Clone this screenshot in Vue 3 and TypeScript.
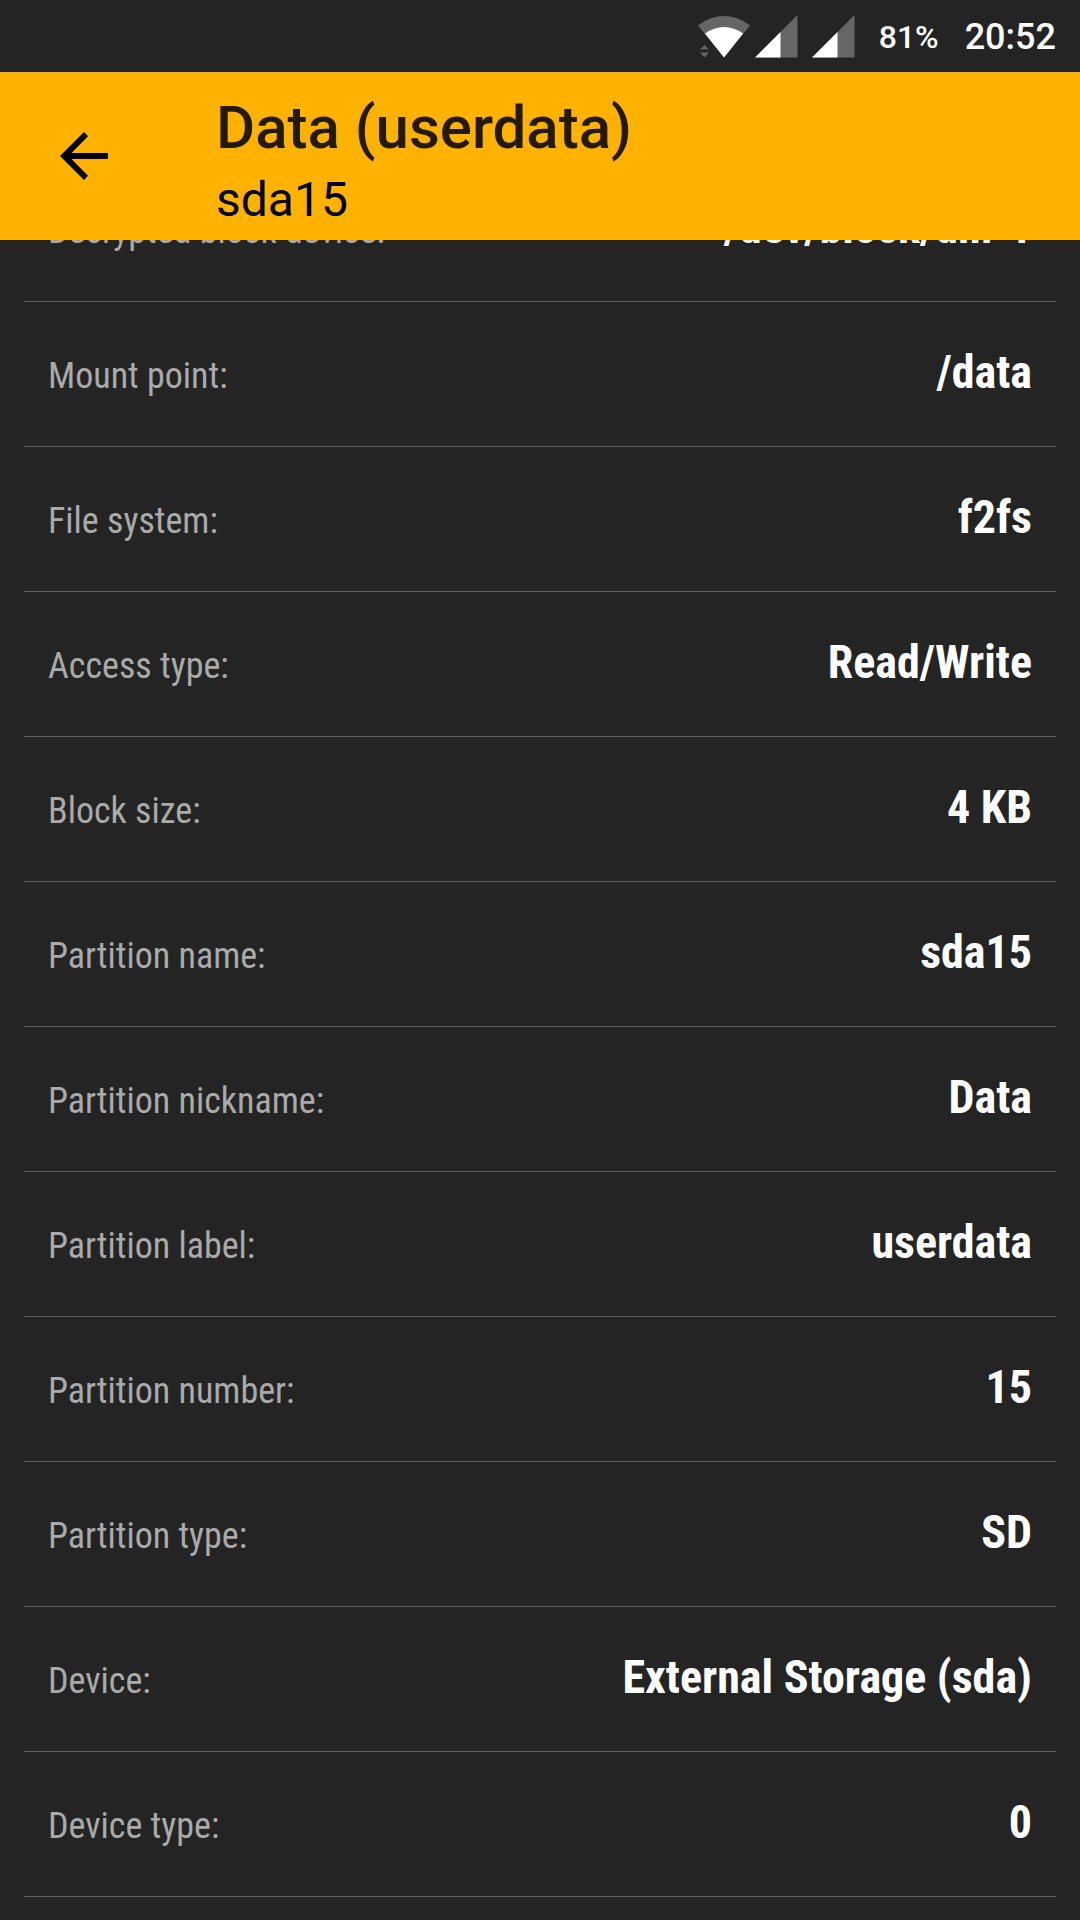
<script setup lang="ts">
interface Detail {
  label: string
  value: string
}

const title = 'Data (userdata)'
const subtitle = 'sda15'

const details: Detail[] = [
  { label: 'Decrypted block device:', value: '/dev/block/dm-1' },
  { label: 'Mount point:', value: '/data' },
  { label: 'File system:', value: 'f2fs' },
  { label: 'Access type:', value: 'Read/Write' },
  { label: 'Block size:', value: '4 KB' },
  { label: 'Partition name:', value: 'sda15' },
  { label: 'Partition nickname:', value: 'Data' },
  { label: 'Partition label:', value: 'userdata' },
  { label: 'Partition number:', value: '15' },
  { label: 'Partition type:', value: 'SD' },
  { label: 'Device:', value: 'External Storage (sda)' },
  { label: 'Device type:', value: '0' },
]
</script>

<template>
  <div class="screen">
    <div class="status">
      <svg class="wifi" viewBox="0 0 54 48" aria-label="Wi-Fi">
        <path class="dim" d="M27 44.500 L1 12.500 Q13 3 27 3 Q41 3 53 12.500 Z" />
        <path class="lit" d="M27 44.500 L8 20.500 Q17 14 27 14 Q37 14 46 20.500 Z" />
        <path class="dim" d="M3 36.500 L7.500 32 L12 36.500 Z M3 39.500 L7.500 44.500 L12 39.500 Z" />
      </svg>
      <svg v-for="n in 2" :key="n" class="signal" viewBox="0 0 43 48" aria-label="Signal">
        <path class="dim" d="M0 44.500 L42.500 2 V44.500 Z" />
        <path class="lit" d="M0 44.500 L25.500 19 V44.500 Z" />
      </svg>
      <span class="battery">81%</span>
      <time class="clock">20:52</time>
    </div>
    <header class="bar">
      <button class="back" type="button" aria-label="Back">
        <svg viewBox="0 0 48 48">
          <path d="M48 21 H11.500 L28 4.300 L24 0 L0 24 L24 48 L28 43.700 L11.500 27 H48 Z" />
        </svg>
      </button>
      <div class="titles">
        <h1>{{ title }}</h1>
        <p>{{ subtitle }}</p>
      </div>
    </header>
    <main class="pane">
      <dl class="list">
        <div v-for="item in details" :key="item.label" class="row">
          <dt>{{ item.label }}</dt>
          <dd>{{ item.value }}</dd>
        </div>
      </dl>
    </main>
  </div>
</template>

<style>
body {
  background: #242424;
}
</style>

<style scoped>
.screen {
  min-height: 100vh;
  background: #242424;
  font-family: Roboto, "Liberation Sans", sans-serif;
  color: #fff;
}

.status {
  display: flex;
  align-items: center;
  justify-content: flex-end;
  box-sizing: border-box;
  height: 72px;
  padding: 2px 24px 0 0;
  font-weight: 500;
}

.wifi {
  width: 54px;
  height: 48px;
  margin-right: 4px;
}

.signal {
  width: 43px;
  height: 48px;
  margin-right: 14px;
}

.dim {
  fill: #666;
}

.lit {
  fill: #fff;
}

.battery {
  margin-left: 10px;
  font-size: 32px;
}

.clock {
  margin-left: 26px;
  font-size: 36px;
}

.bar {
  display: flex;
  align-items: center;
  height: 168px;
  background: #ffb300;
  color: #000;
}

.back {
  display: flex;
  align-items: center;
  justify-content: center;
  width: 168px;
  height: 168px;
  padding: 0;
  border: 0;
  background: none;
}

.back svg {
  width: 48px;
  height: 48px;
}

.titles {
  padding: 16px 0 0 48px;
}

h1 {
  margin: 0;
  color: #231a00;
  font-size: 60px;
  font-weight: 500;
  line-height: 72px;
}

.titles p {
  margin: 0;
  font-size: 48px;
  line-height: 72px;
}

.pane {
  overflow: hidden;
}

/* The list is scrolled so that its first row is partly out of the pane. */
.list {
  margin: -83px 24px 0;
  font-family: "Roboto Condensed", Roboto, "Liberation Sans", sans-serif;
}

.row {
  display: flex;
  align-items: baseline;
  justify-content: space-between;
  height: 145px;
  box-sizing: border-box;
  padding: 43px 24px 0;
  border-bottom: 1px solid #606060;
}

dt {
  color: #aaa;
  font-size: 36px;
  line-height: 54px;
}

dd {
  margin: 0;
  font-size: 46px;
  font-weight: 700;
  line-height: 54px;
}
</style>
